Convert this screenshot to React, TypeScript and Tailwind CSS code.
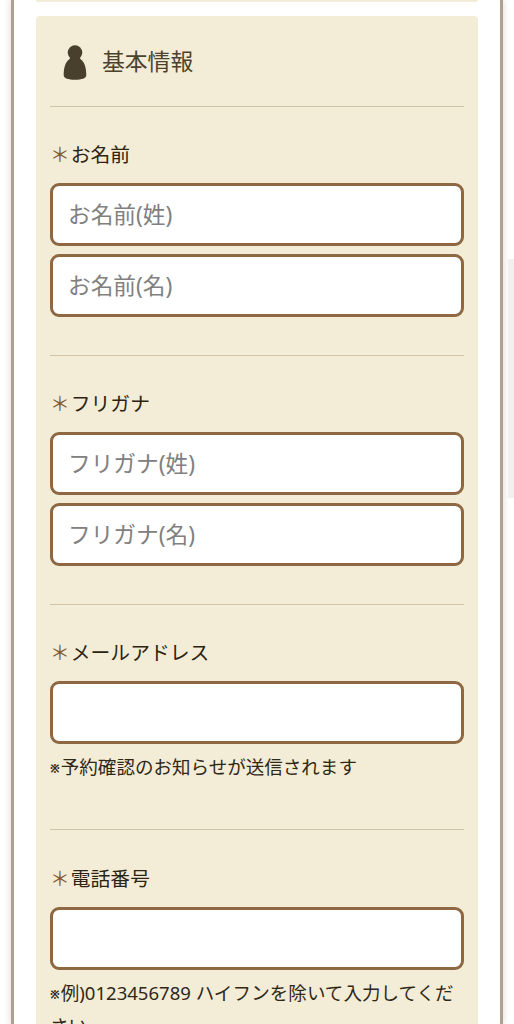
type Field = {
  label: string
  placeholders: string[]
  note?: string
  className: string
}

const fields: Field[] = [
  { label: 'お名前', placeholders: ['お名前(姓)', 'お名前(名)'], className: 'h-[249px] pt-[33px]' },
  { label: 'フリガナ', placeholders: ['フリガナ(姓)', 'フリガナ(名)'], className: 'h-[249px] pt-[33px]' },
  { label: 'メールアドレス', placeholders: [''], note: '予約確認のお知らせが送信されます', className: 'h-[225px] pt-[33px]' },
  { label: '電話番号', placeholders: [''], note: '例)0123456789 ハイフンを除いて入力してください', className: 'h-[260px] pt-[34px]' },
]

function PersonIcon() {
  return (
    <svg width="24" height="36" viewBox="0 0 24 36" fill="#483f2c" aria-hidden="true">
      <circle cx="12" cy="7.6" r="7.3" />
      <path d="M7 12h10c-.3 1.200.1 1.900 1.200 2.700 3.400 2.500 5.100 8 5.100 15.500 0 3-4.500 4.500-11.300 4.500S.7 33.200.7 30.200c0-7.500 1.700-13 5.100-15.500 1.100-.8 1.500-1.500 1.200-2.700z" />
    </svg>
  )
}

function FieldSection({ label, placeholders, note, className }: Field) {
  return (
    <section className={`border-t border-[#d1c4a9] ${className}`}>
      <label className="flex h-[30px] items-center text-[19.8px] leading-[30px] text-[#2b2413]">
        <span className="text-[#825a35]">＊</span>
        <span className="ml-px">{label}</span>
      </label>
      <div className="mt-[13px] flex flex-col gap-2">
        {placeholders.map((placeholder, i) => (
          <input
            key={i}
            type="text"
            aria-label={placeholder || label}
            placeholder={placeholder}
            className="h-[63px] w-full rounded-[9px] border-3 border-[#8d6842] bg-white px-[15px] text-[22.7px] text-[#2b2413] outline-none placeholder:text-[#808080]"
          />
        ))}
      </div>
      {note && (
        <p className="mt-1.5 text-[18.55px] leading-[33px] text-[#2f2817]">
          <span className="mr-px align-[1.5px] text-[11.5px] leading-none font-bold">※</span>
          {note}
        </p>
      )}
    </section>
  )
}

export default function App() {
  return (
    <div className="relative h-[1024px] w-[514px] overflow-hidden bg-white pr-[11px] pl-[11px] font-['Noto_Sans','Noto_Sans_CJK_JP',sans-serif]" lang="ja">
      <main className="h-full border-x-3 border-[#b1a08f] bg-white px-[22px] shadow-[0_0_7px_rgba(90,60,50,0.22)]">
        <div className="h-0.5 rounded-b-sm bg-[#f2ebd7]" />
        <div className="mt-[14px] h-[1100px] rounded-[4px] bg-[#f3ecd6] px-[14px]">
          <header className="flex h-[90px] items-center pt-[4px] pl-[13px]">
            <PersonIcon />
            <h1 className="-mt-px ml-[15px] text-[22.8px] text-[#4c4230]">基本情報</h1>
          </header>
          {fields.map((field) => (
            <FieldSection key={field.label} {...field} />
          ))}
        </div>
      </main>
      <div className="absolute top-[259px] right-0 h-[239px] w-1.5 bg-[#f1f0f1]" />
    </div>
  )
}
